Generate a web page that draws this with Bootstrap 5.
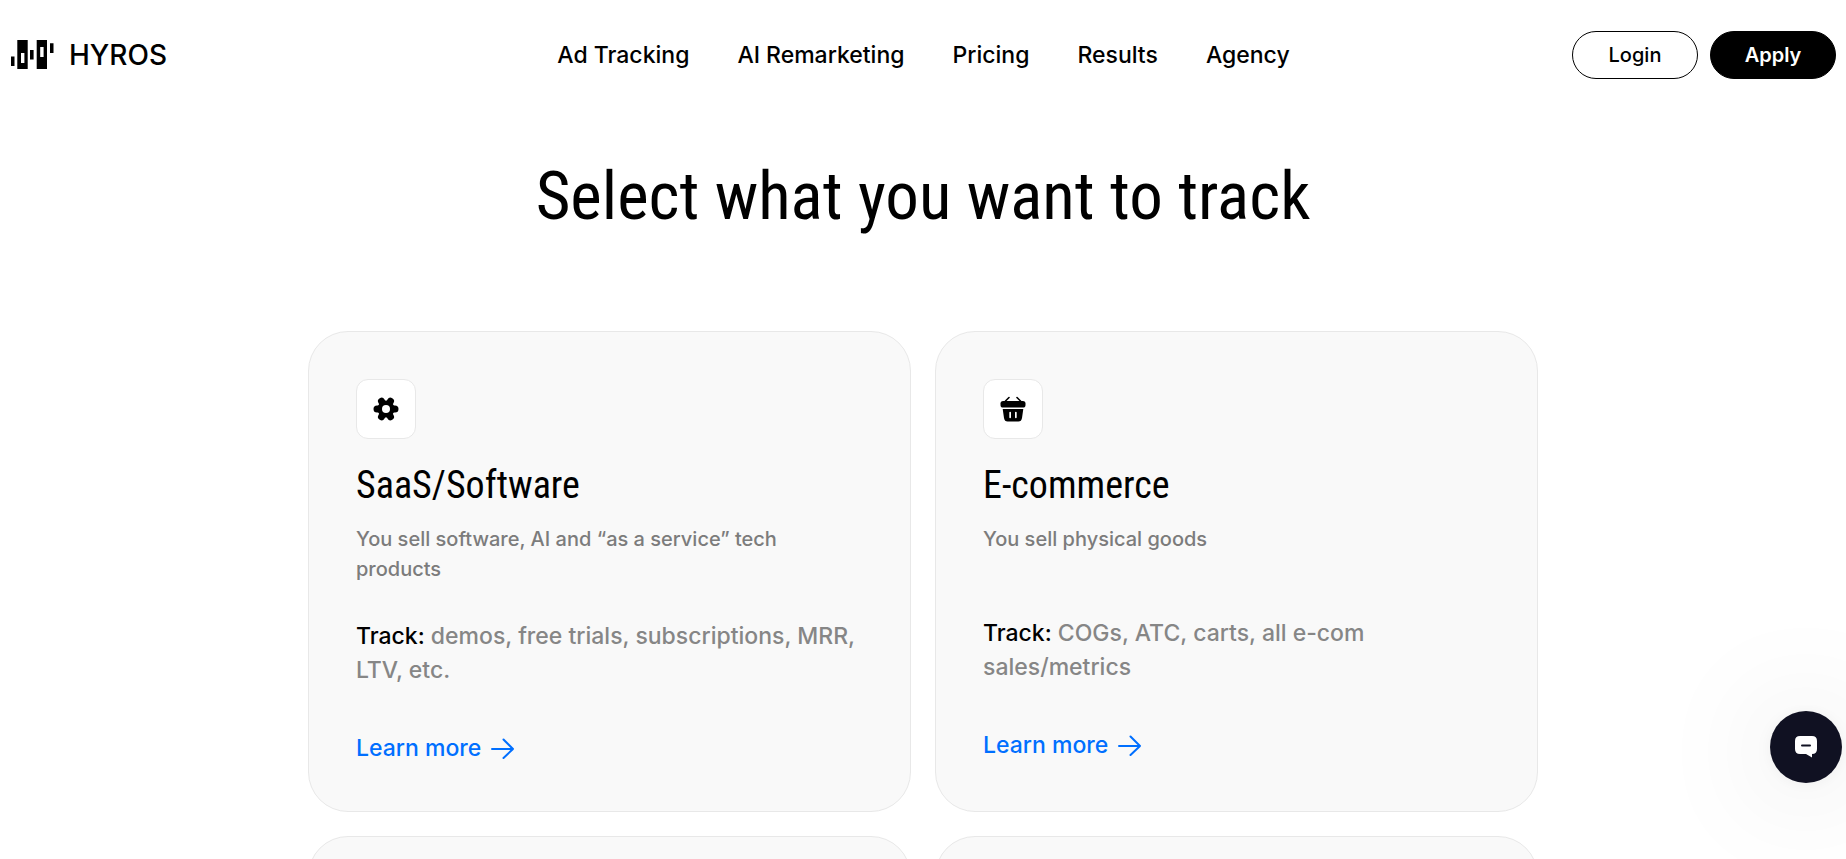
<!DOCTYPE html>
<html lang="en">
<head>
<meta charset="utf-8">
<meta name="viewport" content="width=device-width, initial-scale=1">
<title>HYROS</title>
<link href="https://cdn.jsdelivr.net/npm/bootstrap@5.3.0/dist/css/bootstrap.min.css" rel="stylesheet">
<style>
body { font-family: Inter, "Liberation Sans", sans-serif; color: #000; background: #fff; }
.site-head { padding: 31px 10px 31px 11px; }
.side { flex: 1 1 0; }
.brand { gap: 14px; color: #000; font-size: 28px; line-height: 28px; font-weight: 500; }
.site-nav { gap: 48px; }
.site-nav a { color: #000; font-size: 23px; line-height: 32px; font-weight: 500; }
.actions { gap: 12px; }
.pill { width: 126px; height: 48px; border: 1px solid #000; border-radius: 24px; font-size: 20px; font-weight: 500; padding: 0; }
.pill-dark { background: #000; color: #fff; font-weight: 600; }
.display-title, .tile h2 { font-family: "Roboto Condensed", "Liberation Sans", sans-serif; font-weight: 400; }
.display-title { font-size: 67px; line-height: 80px; margin: 46px 0 95px; }
.tiles { max-width: 1230px; display: grid; grid-template-columns: 1fr 1fr; gap: 24px; }
.tile { background: #f9f9f9; border: 1px solid #e8e8e8; border-radius: 40px; padding: 47px 47px 46px; }
.tile-icon { width: 60px; height: 60px; background: #fff; border: 1px solid #e8e8e8; border-radius: 12px; margin-bottom: 22px; }
.tile h2 { font-size: 38px; line-height: 48px; margin-bottom: 15px; }
.desc { font-size: 20px; line-height: 30px; font-weight: 500; min-height: 57px; max-width: 450px; color: #7c7c7c; margin-bottom: 35px; }
.track { font-size: 23px; line-height: 34px; font-weight: 500; color: #868686; margin-bottom: 44px; }
.track b { color: #000; font-weight: 500; }
.more { font-size: 23px; line-height: 34px; font-weight: 500; color: #006fff; gap: 10px; }
.chat { right: 4px; bottom: 76px; width: 72px; height: 72px; background: #101122; box-shadow: 0 2px 16px rgba(0,0,0,.05), 0 5px 120px rgba(0,0,0,.15); }
</style>
</head>
<body>
<div class="vh-100 overflow-hidden">
<header class="site-head d-flex align-items-center">
  <div class="side d-flex">
    <a class="brand d-flex align-items-center text-decoration-none" href="#">
      <svg width="44" height="30" viewBox="0 0 44 30" aria-hidden="true"><path fill="#000" fill-rule="evenodd" d="M0 16.5h3.5v9.5H0zM6.3 0h10.4v29H6.3zM10 13v10h3.4V13zM19 10h3.6v9.5H19zM25.7 0H36v29H25.7zM29.2 7v10h3.4V7zM39 3.3h3.5V13H39z"/></svg>
      <span>HYROS</span>
    </a>
  </div>
  <nav class="site-nav d-flex">
    <a class="text-decoration-none" href="#">Ad Tracking</a>
    <a class="text-decoration-none" href="#">AI Remarketing</a>
    <a class="text-decoration-none" href="#">Pricing</a>
    <a class="text-decoration-none" href="#">Results</a>
    <a class="text-decoration-none" href="#">Agency</a>
  </nav>
  <div class="side actions d-flex justify-content-end">
    <button type="button" class="pill bg-white">Login</button>
    <button type="button" class="pill pill-dark">Apply</button>
  </div>
</header>
<main>
  <h1 class="display-title text-center">Select what you want to track</h1>
  <div class="tiles mx-auto">
    <section class="tile">
      <div class="tile-icon d-flex align-items-center justify-content-center">
        <svg width="28" height="28" viewBox="0 0 28 28" aria-hidden="true"><g stroke="#000" stroke-width="7" stroke-linecap="round"><path d="M5 14h18M9.5 6.2l9 15.6M18.5 6.2l-9 15.6"/></g><circle cx="14" cy="14" r="8.6"/><circle cx="14" cy="14" r="4" fill="#fff"/></svg>
      </div>
      <h2>SaaS/Software</h2>
      <p class="desc">You sell software, AI and “as a service” tech products</p>
      <p class="track"><b>Track:</b> <span>demos, free trials, subscriptions, MRR,</span><br><span>LTV, etc.</span></p>
      <a class="more d-inline-flex align-items-center text-decoration-none" href="#">Learn more
        <svg width="24" height="22" viewBox="0 0 24 22" fill="none" stroke="currentColor" stroke-width="2" stroke-linecap="round" stroke-linejoin="round" aria-hidden="true"><path d="M1 12h21M12.500 2.500 22 12l-9.500 9"/></svg></a>
    </section>
    <section class="tile">
      <div class="tile-icon d-flex align-items-center justify-content-center">
        <svg width="28" height="28" viewBox="0 0 28 28" aria-hidden="true"><path d="M6.500 6 10 2.500M21.500 6 18 2.500" stroke="#000" stroke-width="1.600" stroke-linecap="round"/><rect x="1.500" y="6" width="25" height="6.500" rx="2.600"/><path fill-rule="evenodd" d="M3.700 14h20.600l-1.300 9q-.6 3.600-3.600 3.600H8.600Q5.600 26.600 5 23zM10.300 17.500v4.800a.8.800 0 0 0 1.700 0v-4.800a.8.800 0 0 0-1.700 0zM16 17.500v4.800a.8.800 0 0 0 1.700 0v-4.800a.8.800 0 0 0-1.700 0z"/></svg>
      </div>
      <h2>E-commerce</h2>
      <p class="desc">You sell physical goods</p>
      <p class="track"><b>Track:</b> <span>COGs, ATC, carts, all e-com</span><br><span>sales/metrics</span></p>
      <a class="more d-inline-flex align-items-center text-decoration-none" href="#">Learn more
        <svg width="24" height="22" viewBox="0 0 24 22" fill="none" stroke="currentColor" stroke-width="2" stroke-linecap="round" stroke-linejoin="round" aria-hidden="true"><path d="M1 12h21M12.500 2.500 22 12l-9.500 9"/></svg></a>
    </section>
    <section class="tile"></section>
    <section class="tile"></section>
  </div>
</main>
<button type="button" class="chat position-fixed rounded-circle border-0 p-0 d-flex align-items-center justify-content-center" aria-label="Open chat">
  <svg width="24" height="24" viewBox="0 0 24 24" aria-hidden="true"><path fill="#fff" d="M6 1h12q5 0 5 5v8q0 5-5 5v3.500L12 19H6q-5 0-5-5V6q0-5 5-5z"/><path d="M8 10.500h8" stroke="#101122" stroke-width="2" stroke-linecap="round"/></svg>
</button>
</div>
<script src="https://cdn.jsdelivr.net/npm/bootstrap@5.3.0/dist/js/bootstrap.bundle.min.js"></script>
</body>
</html>
